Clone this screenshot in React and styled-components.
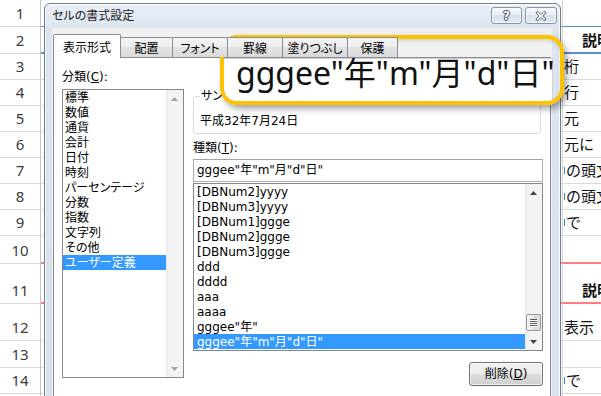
import React from "react";
import styled, { createGlobalStyle } from "styled-components";

const UI_FONT = `"DejaVu Sans", "Noto Sans CJK JP", sans-serif`;

const GlobalStyle = createGlobalStyle`
  html, body { margin: 0; padding: 0; background: #fff; }
  body { width: 601px; height: 396px; overflow: hidden; font-family: ${UI_FONT}; }
  *, *::before, *::after { box-sizing: border-box; }
`;

const Page = styled.div`
  position: relative;
  width: 601px;
  height: 396px;
  overflow: hidden;
  background: #fff;
`;

/* ---------- spreadsheet behind the dialog ---------- */
const Sheet = styled.div`
  display: flex;
  flex-direction: column;
`;

const SheetRow = styled.div`
  display: flex;
  flex: none;
  height: ${(p) => p.$h}px;
`;

const RowHeader = styled.div`
  width: 41px;
  flex: none;
  display: flex;
  align-items: flex-end;
  justify-content: center;
  padding-bottom: 4px;
  border-right: 1px solid #c6c6c6;
  border-bottom: 1px solid #dadada;
  font: 15px/18px "Noto Sans", sans-serif;
  color: #3c3c3c;
`;

const DataCell = styled.div`
  flex: 1;
  border-right: 1px solid #d4d4d4;
  border-bottom: ${(p) => p.$lw}px solid ${(p) => p.$lc};
`;

const DescCell = styled.div`
  width: 38px;
  flex: none;
  display: flex;
  align-items: flex-end;
  padding: 0 0 ${(p) => (p.$lw > 1 ? 3 : 4)}px ${(p) => (p.$bold ? 19 : 1)}px;
  overflow: hidden;
  white-space: nowrap;
  border-bottom: ${(p) => p.$lw}px solid ${(p) => p.$lc};
  font: ${(p) => (p.$bold ? 700 : 400)} 15px/19px "Noto Sans CJK JP", sans-serif;
  color: #111;
`;

const CellMark = styled.span`
  display: inline-block;
  width: 1px;
  height: 7px;
  margin: 0 1px 5px 0;
  background: #2a8ad8;
  flex: none;
`;

/* ---------- dialog ---------- */
const Dialog = styled.div`
  position: absolute;
  left: 44px;
  top: 3px;
  width: 517px;
  height: 430px;
  display: flex;
  flex-direction: column;
  padding: 0 8px 0 7px;
  border: 1px solid #6f7c8c;
  border-radius: 6px 6px 0 0;
  background: linear-gradient(#e9eff7, #dbe4ef 26px, #d9e2ed);
  box-shadow: inset 0 0 0 1px rgba(255, 255, 255, 0.75);
`;

const TitleBar = styled.div`
  height: 24px;
  flex: none;
  display: flex;
  justify-content: space-between;
  margin-right: -5px;
`;

const TitleText = styled.div`
  font: 12px/24px ${UI_FONT};
  font-feature-settings: "palt";
  color: #1b1b1b;
`;

const CaptionButtons = styled.div`
  display: flex;
  gap: 3px;
  padding-top: 3px;
`;

const CaptionButton = styled.div`
  width: ${(p) => p.$w}px;
  height: 17px;
  display: flex;
  align-items: center;
  justify-content: center;
  border: 1px solid #8594a8;
  border-radius: 3px;
  background: linear-gradient(#f7f9fc, #e7edf4 50%, #d8e1ec 50%, #e1e8f1);
  box-shadow: inset 0 0 0 1px rgba(255, 255, 255, 0.8);
`;

const HelpGlyph = styled.span`
  font: 700 12px/12px "DejaVu Sans", sans-serif;
  color: #fff;
  text-shadow: 1px 0 0 #3e4b5e, -1px 0 0 #3e4b5e, 0 1px 0 #3e4b5e, 0 -1px 0 #3e4b5e;
`;

const Client = styled.div`
  flex: 1;
  display: flex;
  flex-direction: column;
  padding-top: 6px;
  background: #f0f0f0;
`;

const TabStrip = styled.div`
  height: 23px;
  flex: none;
  display: flex;
  align-items: flex-end;
  padding-left: 1px;
`;

const Tab = styled.div`
  position: relative;
  z-index: ${(p) => (p.$active ? 2 : 1)};
  width: ${(p) => p.$w}px;
  height: ${(p) => (p.$active ? 24 : 20)}px;
  margin-left: ${(p) => (p.$first ? 0 : -1)}px;
  margin-bottom: ${(p) => (p.$active ? -1 : 0)}px;
  padding-top: ${(p) => (p.$active ? 5 : 3)}px;
  text-align: center;
  border: 1px solid #898c95;
  border-bottom: none;
  border-radius: 2px 2px 0 0;
  background: ${(p) =>
    p.$active ? "#fff" : "linear-gradient(#f4f4f4, #ededed 50%, #e2e2e2 50%, #dadada)"};
  font: 12px/16px ${UI_FONT};
  font-feature-settings: "palt";
  color: #000;
`;

const TabPanel = styled.div`
  flex: 1;
  display: flex;
  gap: 9px;
  margin: 0 1px;
  padding: 11px 7px 0 8px;
  border: 1px solid #898c95;
  background: #fff;
`;

const Column = styled.div`
  display: flex;
  flex-direction: column;
  width: ${(p) => (p.$w ? `${p.$w}px` : "auto")};
  flex: ${(p) => (p.$w ? "none" : 1)};
`;

const FieldLabel = styled.div`
  height: 16px;
  margin-top: ${(p) => p.$mt || 0}px;
  font: 12px/16px ${UI_FONT};
  font-feature-settings: "palt";
  color: #000;
`;

const Key = styled.span`
  text-decoration: underline;
  text-underline-offset: 1px;
`;

const ListBox = styled.div`
  display: flex;
  height: ${(p) => p.$h}px;
  margin-top: ${(p) => p.$mt}px;
  border: 1px solid #828790;
  background: #fff;
`;

const ListItems = styled.div`
  flex: 1;
  display: flex;
  flex-direction: column;
  overflow: hidden;
`;

const ListItem = styled.div`
  height: 15px;
  flex: none;
  padding-left: ${(p) => p.$pl}px;
  white-space: nowrap;
  font: 12px/16px ${UI_FONT};
  font-feature-settings: "palt";
  color: ${(p) => (p.$selected ? "#fff" : "#000")};
  background: ${(p) => (p.$selected ? "#3399ff" : "transparent")};
`;

const ScrollBar = styled.div`
  width: 17px;
  flex: none;
  display: flex;
  flex-direction: column;
  background: linear-gradient(90deg, #e6e6e6, #f2f2f2 2px, #f4f4f4);
`;

const ArrowButton = styled.div`
  height: 17px;
  flex: none;
  display: flex;
  align-items: center;
  justify-content: center;
`;

const Track = styled.div`
  flex: 1;
  display: flex;
  flex-direction: column;
  justify-content: flex-end;
  padding: 0 1px 2px 1px;
`;

const Thumb = styled.div`
  height: 17px;
  display: flex;
  flex-direction: column;
  align-items: center;
  justify-content: center;
  gap: 1px;
  border: 1px solid #979797;
  border-radius: 2px;
  background: linear-gradient(90deg, #f3f3f3, #e8e8e8 50%, #d9d9d9 50%, #e3e3e3);
`;

const GripLine = styled.span`
  width: 7px;
  height: 1px;
  background: #5a5a5a;
  box-shadow: 0 1px 0 #fff;
`;

const GroupBox = styled.fieldset`
  margin: 20px 2px 0 0;
  padding: 0 6px 4px;
  min-width: 0;
  border: 1px solid #d5dfe5;
  border-radius: 3px;
`;

const Legend = styled.legend`
  padding: 0 1px;
  font: 12px/14px ${UI_FONT};
  font-feature-settings: "palt";
  color: #000;
`;

const SampleText = styled.div`
  margin-top: 10px;
  font: 12px/16px ${UI_FONT};
  color: #000;
`;

const TextInput = styled.div`
  height: 23px;
  margin-top: 3px;
  padding-left: 3px;
  border: 1px solid #abadb3;
  border-top-color: #a2a4aa;
  background: #fff;
  font: 12px/21px ${UI_FONT};
  color: #000;
  white-space: nowrap;
`;

const ButtonRow = styled.div`
  display: flex;
  justify-content: flex-end;
  margin-top: 11px;
`;

const PushButton = styled.div`
  width: 74px;
  height: 24px;
  display: flex;
  align-items: center;
  justify-content: center;
  border: 1px solid #707070;
  border-radius: 3px;
  background: linear-gradient(#f2f2f2, #ebebeb 50%, #dddddd 50%, #cfcfcf);
  box-shadow: inset 0 0 0 1px rgba(255, 255, 255, 0.7);
  font: 12px/16px ${UI_FONT};
  color: #000;
`;

/* ---------- magnified callout (a ring drawn over the dialog) ---------- */
const Callout = styled.div`
  position: absolute;
  left: 220px;
  top: 35px;
  width: 344px;
  height: 70px;
  padding: 19px 7px 0 0;
  overflow: hidden;
  border: 4px solid #fcc300;
  border-radius: 17px;
  background: transparent;
  box-shadow: 3px 4px 6px rgba(0, 0, 0, 0.35), inset 1px 1px 4px rgba(0, 0, 0, 0.18);
`;

const CalloutField = styled.div`
  height: 60px;
  padding-left: 12px;
  border-top: 1px solid #d2d2d2;
  border-right: 1px solid #d2d2d2;
  background: #fff;
  font: 32px/27px "Noto Sans", "Noto Sans CJK JP", sans-serif;
  color: #111;
  white-space: nowrap;
`;

/* ---------- data ---------- */
const BLUE = "#5b8fd0";
const RED = "#ff7c80";
const GRID = "#dadada";

const rows = [
  { n: 1, h: 27, lc: BLUE, lw: 1 },
  { n: 2, h: 27, lc: BLUE, lw: 2, t: "説明", bold: true },
  { n: 3, h: 26, t: "桁" },
  { n: 4, h: 26, t: "行" },
  { n: 5, h: 26, t: "元" },
  { n: 6, h: 26, t: "元に" },
  { n: 7, h: 26, t: "の頭文", mark: true },
  { n: 8, h: 26, t: "の頭文", mark: true },
  { n: 9, h: 26, t: "で", mark: true },
  { n: 10, h: 28, lc: RED, lw: 2 },
  { n: 11, h: 40, lc: RED, lw: 2, t: "説明", bold: true },
  { n: 12, h: 37, t: "表示" },
  { n: 13, h: 27 },
  { n: 14, h: 26, t: "で", mark: true },
  { n: 15, h: 26 },
];

const categories = [
  "標準",
  "数値",
  "通貨",
  "会計",
  "日付",
  "時刻",
  "パーセンテージ",
  "分数",
  "指数",
  "文字列",
  "その他",
  "ユーザー定義",
];

const FORMAT = 'gggee"年"m"月"d"日"';

const types = [
  "[DBNum2]yyyy",
  "[DBNum3]yyyy",
  "[DBNum1]ggge",
  "[DBNum2]ggge",
  "[DBNum3]ggge",
  "ddd",
  "dddd",
  "aaa",
  "aaaa",
  'gggee"年"',
  FORMAT,
];

const tabs = [
  { label: "表示形式", w: 68, active: true },
  { label: "配置", w: 53 },
  { label: "フォント", w: 56 },
  { label: "罫線", w: 56 },
  { label: "塗りつぶし", w: 66 },
  { label: "保護", w: 51 },
];

function Arrow({ up, color }) {
  return (
    <svg width="7" height="4" viewBox="0 0 7 4">
      <polygon points={up ? "0,4 7,4 3.5,0" : "0,0 7,0 3.5,4"} fill={color} />
    </svg>
  );
}

function Scroller({ color, thumb }) {
  return (
    <ScrollBar>
      <ArrowButton>
        <Arrow up color={color} />
      </ArrowButton>
      <Track>
        {thumb && (
          <Thumb>
            <GripLine />
            <GripLine />
            <GripLine />
            <GripLine />
          </Thumb>
        )}
      </Track>
      <ArrowButton>
        <Arrow color={color} />
      </ArrowButton>
    </ScrollBar>
  );
}

export default function App() {
  return (
    <Page>
      <GlobalStyle />
      <Sheet>
        {rows.map((r) => {
          const lc = r.lc || GRID;
          const lw = r.lw || 1;
          return (
            <SheetRow key={r.n} $h={r.h}>
              <RowHeader>{r.n}</RowHeader>
              <DataCell $lc={lc} $lw={lw} />
              <DescCell $lc={lc} $lw={lw} $bold={r.bold}>
                {r.mark && <CellMark />}
                {r.t}
              </DescCell>
            </SheetRow>
          );
        })}
      </Sheet>

      <Dialog>
        <TitleBar>
          <TitleText>セルの書式設定</TitleText>
          <CaptionButtons>
            <CaptionButton $w={31}>
              <HelpGlyph>?</HelpGlyph>
            </CaptionButton>
            <CaptionButton $w={32}>
              <svg width="12" height="10" viewBox="0 0 12 10">
                <path
                  d="M1 1.5 L3 0.5 L6 3.5 L9 0.5 L11 1.5 L8 5 L11 8.5 L9 9.5 L6 6.5 L3 9.5 L1 8.5 L4 5 Z"
                  fill="#fff"
                  stroke="#3e4b5e"
                  strokeWidth="0.9"
                  strokeLinejoin="round"
                />
              </svg>
            </CaptionButton>
          </CaptionButtons>
        </TitleBar>
        <Client>
          <TabStrip>
            {tabs.map((t, i) => (
              <Tab key={t.label} $w={t.w} $active={t.active} $first={i === 0}>
                {t.label}
              </Tab>
            ))}
          </TabStrip>
          <TabPanel>
            <Column $w={122}>
              <FieldLabel>
                分類(<Key>C</Key>):
              </FieldLabel>
              <ListBox $h={289} $mt={4}>
                <ListItems>
                  {categories.map((c) => (
                    <ListItem key={c} $pl={2} $selected={c === "ユーザー定義"}>
                      {c}
                    </ListItem>
                  ))}
                </ListItems>
                <Scroller color="#a3a3a3" />
              </ListBox>
            </Column>
            <Column>
              <GroupBox>
                <Legend>サンプル</Legend>
                <SampleText>平成32年7月24日</SampleText>
              </GroupBox>
              <FieldLabel $mt={6}>
                種類(<Key>T</Key>):
              </FieldLabel>
              <TextInput>{FORMAT}</TextInput>
              <ListBox $h={168} $mt={1}>
                <ListItems>
                  {types.map((t, i) => (
                    <ListItem key={t} $pl={3} $selected={i === types.length - 1}>
                      {t}
                    </ListItem>
                  ))}
                </ListItems>
                <Scroller color="#444" thumb />
              </ListBox>
              <ButtonRow>
                <PushButton>
                  削除(<Key>D</Key>)
                </PushButton>
              </ButtonRow>
            </Column>
          </TabPanel>
        </Client>
      </Dialog>

      <Callout>
        <CalloutField>{FORMAT}</CalloutField>
      </Callout>
    </Page>
  );
}
